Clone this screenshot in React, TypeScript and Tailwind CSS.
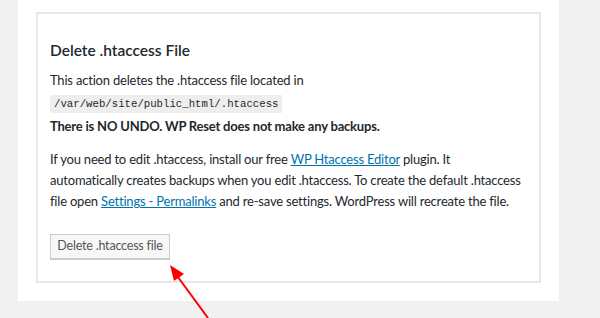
export default function App() {
  return (
    <div className="relative w-[600px] h-[318px] overflow-hidden bg-[#f1f1f1] pl-[18px] font-['Lato',sans-serif] text-[#23282d]">
      <div className="w-[541px] h-[301px] bg-white pl-[18px] pt-[12px]">
        <div className="w-[505px] h-[271px] border-2 border-[#e7e7e7] px-[12px] pt-[25px]">
          <h2 className="text-[15.5px] leading-[22px] font-semibold">Delete .htaccess File</h2>
          <div className="mt-[8px] text-[13px] leading-[22px] tracking-[-0.2px]">
            <div>This action deletes the .htaccess file located in</div>
            <div>
              <code className="bg-[#eeeeee] px-[4px] py-[3px] font-['Liberation_Mono',monospace] text-[10.7px] tracking-normal">
                /var/web/site/public_html/.htaccess
              </code>
            </div>
            <div className="font-bold">There is NO UNDO. WP Reset does not make any backups.</div>
          </div>
          <p className="mt-[12px] w-[473px] text-[13px] leading-[21px] tracking-[-0.2px]">
            If you need to edit .htaccess, install our free{" "}
            <a href="#" className="text-[#0073aa] underline">WP Htaccess Editor</a> plugin. It automatically creates
            backups when you edit .htaccess. To create the default .htaccess file open{" "}
            <a href="#" className="text-[#0073aa] underline">Settings - Permalinks</a> and re-save settings. WordPress
            will recreate the file.
          </p>
          <button className="mt-[22px] h-[25px] w-[120px] whitespace-nowrap border border-[#cccccc] bg-[#f7f7f7] text-[12.5px] tracking-[-0.2px] text-[#555555] shadow-[0_1px_0_#cccccc]">
            Delete .htaccess file
          </button>
        </div>
      </div>
      <svg className="absolute left-0 top-0" width="600" height="318" viewBox="0 0 600 318">
        <line x1="208" y1="318" x2="175" y2="273" stroke="#ff0000" strokeWidth="2" />
        <polygon points="170,265 184,274 174,281" fill="#ff0000" />
      </svg>
    </div>
  );
}
